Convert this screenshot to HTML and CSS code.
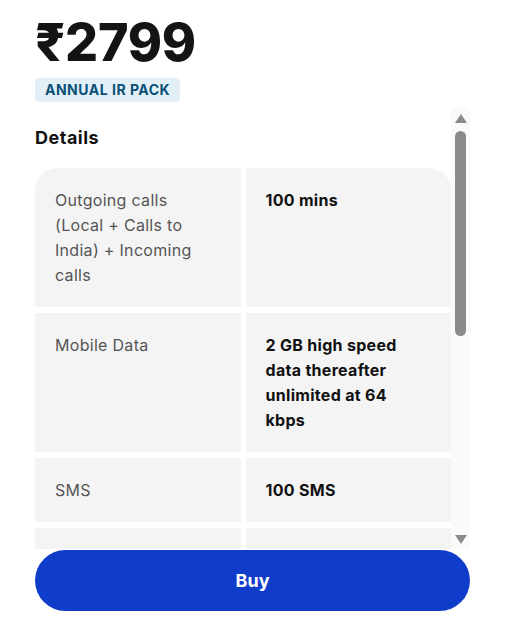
FILE: index.html
```html
<!DOCTYPE html>
<html>
<head>
    <meta charset="utf-8">
    <meta name="viewport" content="width=device-width, initial-scale=1">
    <title>Annual IR Pack</title>
    <link rel="stylesheet" href="styles.css">
</head>
<body>
    <div class="page">
        <div class="price">₹2799</div>
        <div class="pack-badge">ANNUAL IR PACK</div>

        <div class="details-wrap">
            <div class="details-box">
                <div class="details-title">Details</div>
                <div class="details-grid">
                    <div class="cell label first-left">Outgoing calls (Local + Calls to India) + Incoming calls</div>
                    <div class="cell value first-right">100 mins</div>

                    <div class="cell label">Mobile Data</div>
                    <div class="cell value">2 GB high speed data thereafter unlimited at 64 kbps</div>

                    <div class="cell label">SMS</div>
                    <div class="cell value">100 SMS</div>

                    <div class="cell label">Incoming SMS</div>
                    <div class="cell value">Free</div>

                    <div class="cell label">Validity</div>
                    <div class="cell value">365 days</div>

                    <div class="cell label">Countries</div>
                    <div class="cell value">Valid in all supported roaming countries</div>

                    <div class="cell label">Auto renewal</div>
                    <div class="cell value">Not applicable</div>
                </div>
            </div>

            <div class="scroll-track">
                <div class="scroll-arrow up"></div>
                <div class="scroll-thumb"></div>
                <div class="scroll-arrow down"></div>
            </div>
        </div>

        <button class="buy-button">Buy</button>
    </div>
</body>
</html>
```

FILE: styles.css
```css
:root {
    --text-color: #111111;
    --label-color: #555555;
    --cell-bg: #f4f4f4;
    --badge-bg: #e3eff7;
    --badge-text: #0b5177;
    --buy-blue: #0f3cc9;
    --scroll-grey: #8b8b8b;
}

* {
    margin: 0;
    padding: 0;
    box-sizing: border-box;
    font-family: Inter, Roboto, 'Liberation Sans', sans-serif;
}

body {
    background: #ffffff;
    color: var(--text-color);
}

.page {
    width: 470px;
    padding: 14px 0 0 35px;
    display: flex;
    flex-direction: column;
    align-items: flex-start;
}

.price {
    font-size: 52px;
    line-height: 58px;
    font-weight: 800;
    letter-spacing: -0.3px;
    color: #141414;
}

.pack-badge {
    margin-top: 6px;
    height: 24px;
    line-height: 24px;
    padding: 0 10px;
    background: var(--badge-bg);
    color: var(--badge-text);
    font-size: 14px;
    font-weight: 700;
    letter-spacing: 0.5px;
    border-radius: 4px;
}

/* box with the table and its scrollbar */
.details-wrap {
    position: relative;
    margin-top: 6px;
    width: 435px;
    height: 441px;
}

.details-box {
    height: 100%;
    overflow: hidden;
    padding: 18px 19px 20px 0;
}

.details-title {
    font-size: 18px;
    line-height: 24px;
    font-weight: 700;
    letter-spacing: 0.5px;
    color: #111111;
}

.details-grid {
    margin-top: 18px;
    display: grid;
    grid-template-columns: 1fr 1fr;
    column-gap: 5px;
    row-gap: 6px;
}

.cell {
    background: var(--cell-bg);
    padding: 20px 35px 19px 20px;
    font-size: 16px;
    line-height: 25px;
    letter-spacing: 0.3px;
}

.label {
    color: var(--label-color);
}

.value {
    font-weight: 700;
    color: #111111;
}

.first-left {
    border-top-left-radius: 22px;
}

.first-right {
    border-top-right-radius: 22px;
}

.scroll-track {
    position: absolute;
    top: 0;
    right: 0;
    width: 19px;
    height: 100%;
    background: #fafafa;
    display: flex;
    flex-direction: column;
    align-items: center;
    padding: 6px 0 5px 0;
}

.scroll-arrow {
    width: 0;
    height: 0;
    border-left: 6px solid transparent;
    border-right: 6px solid transparent;
}

.scroll-arrow.up {
    border-bottom: 9px solid var(--scroll-grey);
}

.scroll-arrow.down {
    margin-top: auto;
    border-top: 9px solid var(--scroll-grey);
}

.scroll-thumb {
    margin-top: 8px;
    width: 11px;
    height: 205px;
    border-radius: 6px;
    background: var(--scroll-grey);
}

.buy-button {
    margin-top: 1px;
    width: 435px;
    height: 61px;
    border: none;
    border-radius: 31px;
    background: var(--buy-blue);
    color: #ffffff;
    font-size: 18px;
    font-weight: 700;
    cursor: pointer;
}
```
